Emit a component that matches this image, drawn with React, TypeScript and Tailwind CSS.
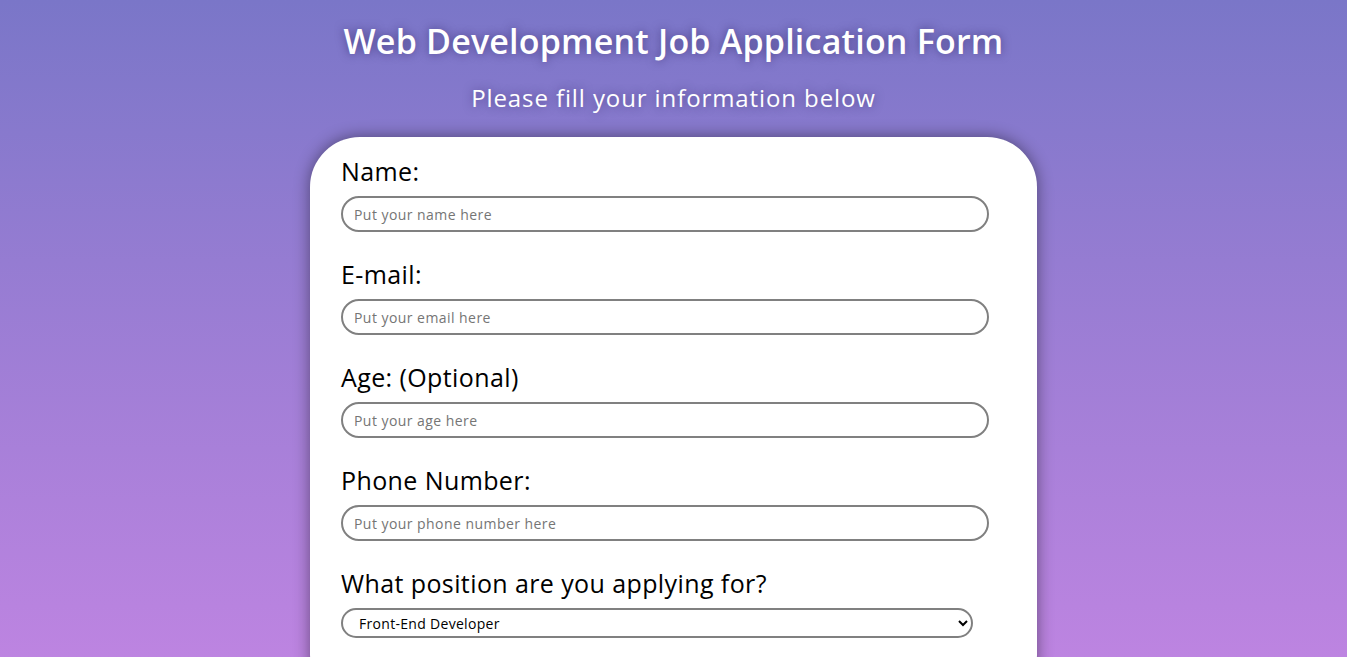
import { useState } from "react"

type FieldProps = {
  label: string
  placeholder: string
  type?: string
}

const Field = ({ label, placeholder, type = "text" }: FieldProps) => {
  return (
    <div className="mb-[27px]">
      <label className="block text-[25px] leading-[30px] tracking-[0.4px] text-black mb-[10px]">{label}</label>
      <input
        type={type}
        placeholder={placeholder}
        className="block w-[648px] h-[36px] rounded-full border-2 border-[#808080] px-[11px] text-[14px] tracking-[0.45px] text-black placeholder:text-[#757575] outline-none"
      />
    </div>
  )
}

export default function App() {
  const [position, setPosition] = useState("front")

  return (
    <div
      className="min-h-screen bg-fixed bg-gradient-to-b from-[#7a76c8] to-[#bd84e1] pb-10"
      style={{ fontFamily: '"Open Sans", "Liberation Sans", sans-serif' }}
    >
      <h1 className="pt-[20px] text-center text-[34px] leading-[42px] font-semibold tracking-[0.2px] text-white [text-shadow:0_0_10px_rgba(40,30,90,0.6)]">
        Web Development Job Application Form
      </h1>
      <p className="mt-[21px] text-center text-[24px] leading-[30px] tracking-[0.9px] text-white [text-shadow:0_0_10px_rgba(40,30,90,0.5)]">
        Please fill your information below
      </p>

      <form className="mx-auto mt-[24px] w-[727px] rounded-[50px] bg-white px-[31px] pt-[19px] pb-[40px] shadow-[0_0_16px_rgba(0,0,0,0.45)]">
        <Field label="Name:" placeholder="Put your name here" />
        <Field label="E-mail:" placeholder="Put your email here" type="email" />
        <Field label="Age: (Optional)" placeholder="Put your age here" />
        <Field label="Phone Number:" placeholder="Put your phone number here" />

        <div className="mb-[27px]">
          <label className="block text-[25px] leading-[30px] tracking-[0.4px] text-black mb-[10px]">
            What position are you applying for?
          </label>
          <select
            value={position}
            onChange={(e) => setPosition(e.target.value)}
            className="block w-[632px] h-[30px] rounded-[15px] border-2 border-[#808080] bg-white pl-[12px] pr-[4px] text-[14px] tracking-[0.3px] text-black"
          >
            <option value="front">Front-End Developer</option>
            <option value="back">Back-End Developer</option>
            <option value="full">Full-Stack Developer</option>
          </select>
        </div>
      </form>
    </div>
  )
}
